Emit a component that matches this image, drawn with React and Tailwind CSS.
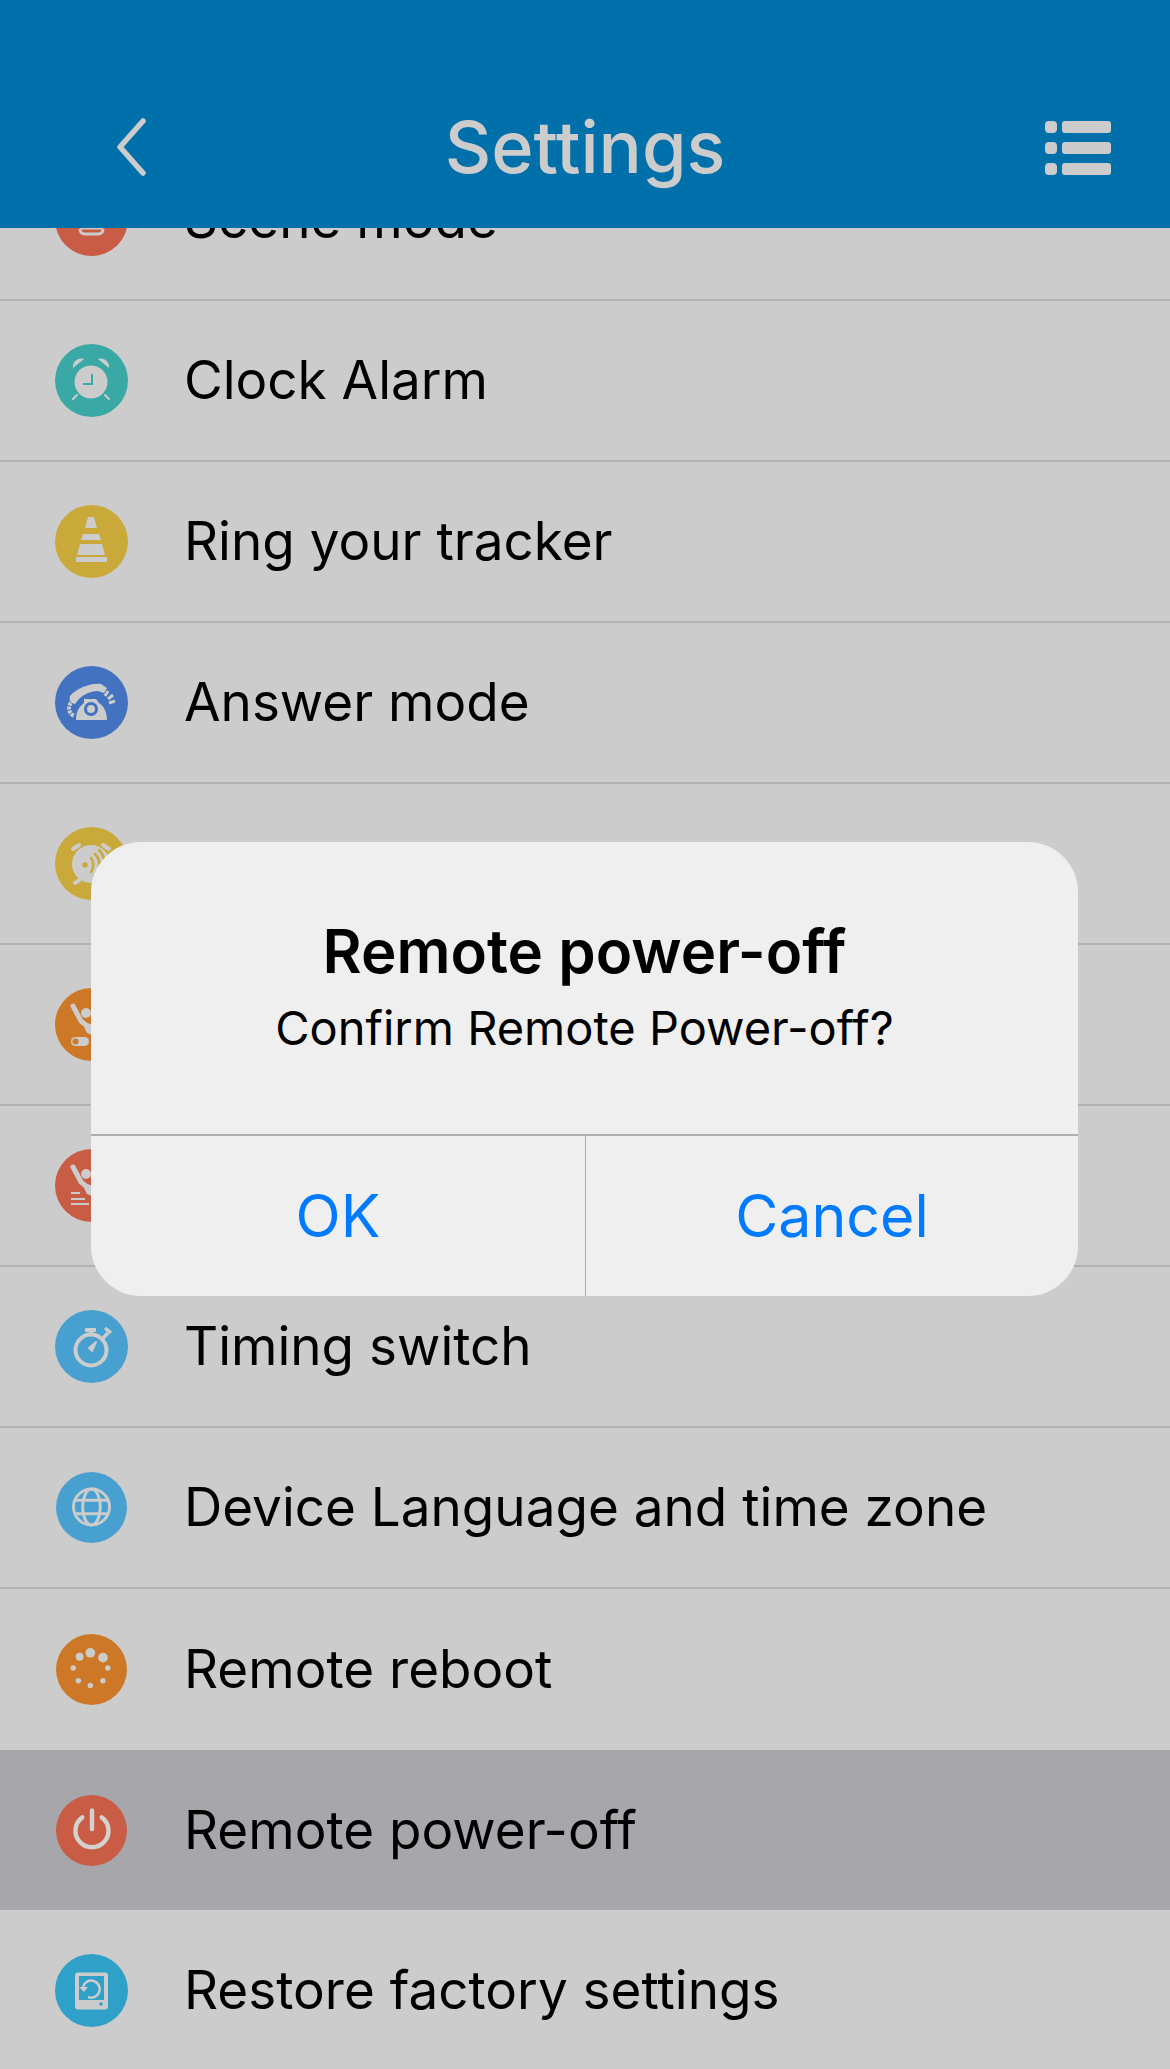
const sans = "font-['Inter','Liberation_Sans',sans-serif]";

function BackIcon() {
  return (
    <svg viewBox="0 0 30 58" className="ml-[57px] h-[58px] w-[30px]" fill="none" stroke="#cccccc" strokeWidth="5.5" strokeLinecap="round" strokeLinejoin="round">
      <path d="M27 3 4 29l23 26" />
    </svg>
  );
}

function MenuLine() {
  return (
    <div className="flex h-[12px] gap-[5px]">
      <i className="w-[12px] rounded-[4px] bg-[#cccccc]" />
      <i className="flex-1 rounded-[3px] bg-[#cccccc]" />
    </div>
  );
}

function ClockIcon() {
  return (
    <svg viewBox="0 0 73 73" className="w-full h-full">
      <circle cx="36" cy="38" r="16.5" fill="#ccc" />
      <path d="M18 24c-1-6 5-11 11-9z M54 24c1-6-5-11-11-9z" fill="#ccc" />
      <path d="M22 51l-4 4M50 51l4 4" stroke="#ccc" strokeWidth="2" strokeLinecap="round" />
      <path d="M37 30v10h-9" fill="none" stroke="#3aa9a5" strokeWidth="2" />
    </svg>
  );
}

function ConeIcon() {
  return (
    <svg viewBox="0 0 73 73" className="w-full h-full" fill="#ccc">
      <path d="M33 12h6l3 11H30z" />
      <path d="M28 29h16l2 6H26z" />
      <path d="M25 39h22l3 11H22z" />
      <path d="M21 52h31v5H21z" />
    </svg>
  );
}

function PhoneIcon() {
  return (
    <svg viewBox="0 0 73 73" className="w-full h-full">
      <path d="M15 30C22 22 36 17 46 18l6 4-3 5-6-2c-8 0-15 4-19 8l-4 5c-5-1-6-4-5-8z" fill="#ccc" />
      <path d="M29 33h12l3 4c5 3 8 9 8 17H21c0-6 2-13 8-17z" fill="#ccc" />
      <circle cx="36" cy="43" r="5.5" fill="none" stroke="#4272c0" strokeWidth="3" />
      <path d="M50 30l3-5M53 33l5-4M54 37l6-2" stroke="#ccc" strokeWidth="3" />
      <path d="M16 37c-3 3-3 10 3 13" fill="none" stroke="#ccc" strokeWidth="4" strokeDasharray="3 1" />
    </svg>
  );
}

function BellWaveIcon() {
  return (
    <svg viewBox="0 0 73 73" className="w-full h-full">
      <circle cx="36" cy="37" r="19" fill="#ccc" />
      <path d="M18 22l6-4M48 18l6 4M20 56l4-2.500" stroke="#ccc" strokeWidth="4" strokeLinecap="round" />
      <circle cx="30" cy="38" r="2.700" fill="#c9a93a" />
      <path d="M36 31c3 4 3 10 0 14M40 27c6 6 6 16 0 22M44 23c8 8 8 22 0 30" fill="none" stroke="#c9a93a" strokeWidth="2.500" strokeLinecap="round" />
    </svg>
  );
}

function PersonIcon({ children }) {
  return (
    <svg viewBox="0 0 73 73" className="w-full h-full">
      <path d="M18 18l8 15c3 3 6 5 10 6" fill="none" stroke="#ccc" strokeWidth="5" strokeLinecap="round" />
      <path d="M27 35l10 3v9l-5-2z" fill="#ccc" />
      <circle cx="31" cy="25" r="5" fill="#ccc" />
      {children}
    </svg>
  );
}

function StopwatchIcon() {
  return (
    <svg viewBox="0 0 73 73" className="w-full h-full" fill="none" stroke="#ccc">
      <circle cx="36" cy="40" r="15.500" strokeWidth="4" />
      <path d="M30 20h11" strokeWidth="4" />
      <path d="M36 21v4" strokeWidth="4" />
      <path d="M48 28l5-5M50 18l6 5" strokeWidth="3.500" />
      <path d="M34 38l7-6-4 9z" fill="#ccc" strokeWidth="2" strokeLinejoin="round" />
    </svg>
  );
}

function GlobeIcon() {
  return (
    <svg viewBox="0 0 71 73" className="w-full h-full" fill="none" stroke="#ccc" strokeWidth="3">
      <circle cx="35.500" cy="36" r="18.500" />
      <ellipse cx="35.500" cy="36" rx="9" ry="18.500" />
      <path d="M19 29h33M19 43h33" />
    </svg>
  );
}

function SpinnerIcon() {
  const dots = [
    [34.3, 19.4, 5], [23.3, 23.4, 4], [47.3, 24.3, 5], [16.7, 35, 2.8], [52.3, 35, 2.8],
    [22, 48, 2.8], [47.3, 48, 2.8], [34.3, 53, 2.8],
  ];
  return (
    <svg viewBox="0 0 71 73" className="w-full h-full" fill="#ccc">
      {dots.map(([cx, cy, r]) => (
        <circle key={`${cx}-${cy}`} cx={cx} cy={cy} r={r} />
      ))}
    </svg>
  );
}

function PowerIcon() {
  return (
    <svg viewBox="0 0 71 73" className="w-full h-full" fill="none" stroke="#d4d2d0" strokeWidth="4.500" strokeLinecap="round">
      <path d="M36 16v19" />
      <path d="M26 23a17 17 0 1 0 20 0" />
    </svg>
  );
}

function RestoreIcon() {
  return (
    <svg viewBox="0 0 73 73" className="w-full h-full">
      <rect x="20" y="18.500" width="33" height="37" rx="3" fill="#ccc" />
      <rect x="24" y="22" width="25" height="24" fill="#2fa0c7" />
      <path d="M28 33a8.500 8.500 0 1 1 5 10" fill="none" stroke="#ccc" strokeWidth="2.500" />
      <path d="M24 33h9l-4 5z" fill="#ccc" />
      <circle cx="46" cy="50" r="1.800" fill="#2fa0c7" />
    </svg>
  );
}

function SceneIcon() {
  return (
    <svg viewBox="0 0 73 73" className="w-full h-full" fill="none" stroke="#ccc" strokeWidth="3">
      <rect x="25" y="20" width="23" height="25" rx="3" />
      <path d="M25 46c0 3 2 5 5 5h13c3 0 5-2 5-5" />
    </svg>
  );
}

const rows = [
  { label: 'Scene mode', color: 'bg-[#c95c45]', icon: <SceneIcon /> },
  { label: 'Clock Alarm', color: 'bg-[#3aa9a5]', icon: <ClockIcon /> },
  { label: 'Ring your tracker', color: 'bg-[#c9a93a]', icon: <ConeIcon /> },
  { label: 'Answer mode', color: 'bg-[#4272c0]', icon: <PhoneIcon /> },
  { label: 'Call blocked', color: 'bg-[#c9a93a]', icon: <BellWaveIcon /> },
  {
    label: '',
    color: 'bg-[#cc7826]',
    icon: (
      <PersonIcon>
        <rect x="16" y="49" width="18" height="9" rx="4.500" fill="#ccc" />
        <circle cx="20.500" cy="53.500" r="3" fill="#cc7826" />
      </PersonIcon>
    ),
  },
  {
    label: '',
    color: 'bg-[#c95c45]',
    icon: (
      <PersonIcon>
        <path d="M16 44h9M16 50h14M16 55h18" stroke="#ccc" strokeWidth="1.800" />
      </PersonIcon>
    ),
  },
  { label: 'Timing switch', color: 'bg-[#48a0d0]', icon: <StopwatchIcon /> },
  { label: 'Device Language and time zone', color: 'bg-[#48a0d0]', icon: <GlobeIcon />, small: true },
  { label: 'Remote reboot', color: 'bg-[#cc7826]', icon: <SpinnerIcon />, small: true, plain: true },
  { label: 'Remote power-off', color: 'bg-[#c95c45]', icon: <PowerIcon />, small: true, active: true, plain: true },
  { label: 'Restore factory settings', color: 'bg-[#2fa0c7]', icon: <RestoreIcon />, plain: true },
];

function Row({ row }) {
  return (
    <div
      className={`flex items-center pl-[55px] ${row.active ? 'h-[160px] bg-[#a7a6ab]' : 'h-[161px]'} ${
        row.plain ? '' : 'border-b-2 border-[#b2b2b2]'
      }`}
    >
      <div className="flex h-[73px] w-[73px] shrink-0 items-center justify-center">
        <div className={`rounded-full ${row.small ? 'h-[71px] w-[71px]' : 'h-[73px] w-[73px]'} ${row.color}`}>{row.icon}</div>
      </div>
      <span className="ml-[56px] text-[53px] leading-none text-black">{row.label}</span>
    </div>
  );
}

export default function App() {
  return (
    <div className={`relative h-[2069px] w-[1170px] overflow-hidden bg-[#cccccc] ${sans}`}>
      <header className="relative z-10 flex h-[228px] items-center bg-[#0070aa] px-[59px] pt-[66px]">
        <div className="flex flex-1 justify-start">
          <BackIcon />
        </div>
        <h1 className="text-[72px] font-medium leading-[84px] text-[#cccccc]">Settings</h1>
        <div className="flex flex-1 justify-end">
          <div className="mt-[2px] flex h-[54px] w-[66px] flex-col justify-between">
            <MenuLine />
            <MenuLine />
            <MenuLine />
          </div>
        </div>
      </header>

      <div className="-mt-[88px]">
        {rows.map((row) => (
          <Row key={row.label + row.color} row={row} />
        ))}
      </div>

      {/* dialog sits over the list */}
      <div className="absolute left-[91px] top-[842px] flex h-[454px] w-[987px] flex-col rounded-[50px] bg-[#f0efef] text-center">
        <div className="flex-1 pt-[74px]">
          <h2 className="text-[60px] font-semibold leading-[70px] text-black">Remote power-off</h2>
          <p className="mt-[14px] text-[47px] leading-[56px] text-black">Confirm Remote Power-off?</p>
        </div>
        <div className="flex h-[162px] border-t-2 border-[#b0aeae] text-[59px] text-[#007aff]">
          <button className="flex-1 border-r border-[#b0aeae]">OK</button>
          <button className="w-[492px]">Cancel</button>
        </div>
      </div>
    </div>
  );
}
